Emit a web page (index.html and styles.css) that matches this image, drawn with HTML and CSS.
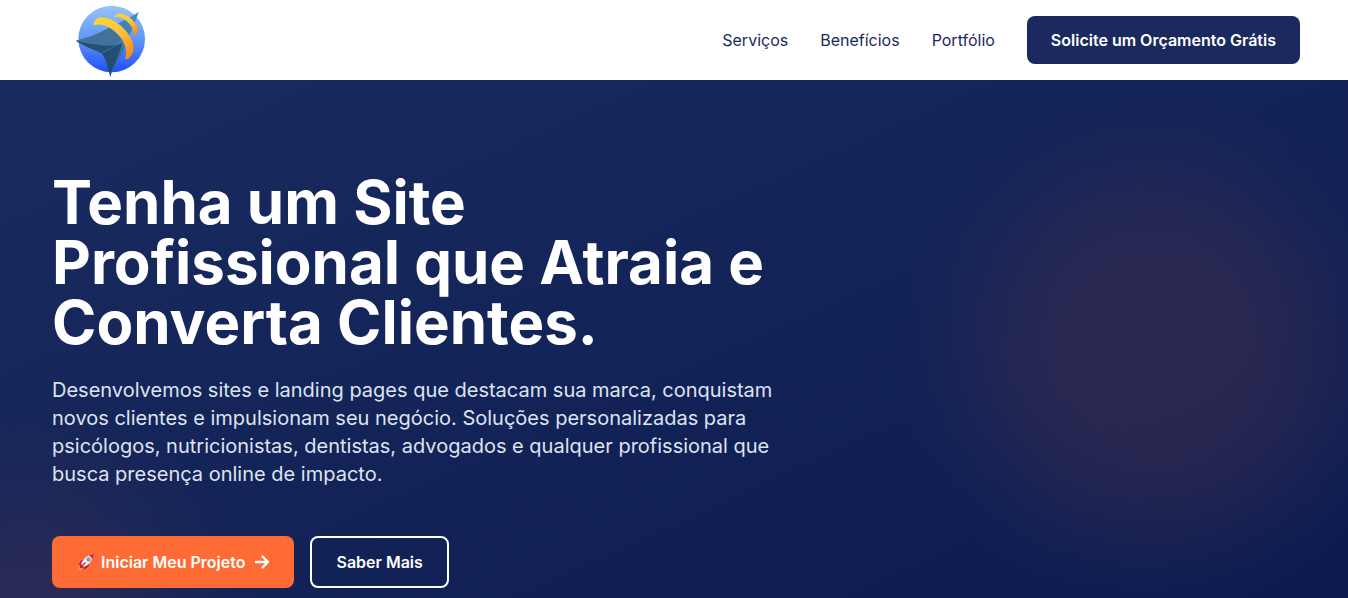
FILE: index.html
```html
<!DOCTYPE html>
<html lang="pt-BR">
<head>
<meta charset="utf-8">
<meta name="viewport" content="width=device-width, initial-scale=1">
<title>Sites Profissionais</title>
<link rel="stylesheet" href="styles.css">
</head>
<body>
<header class="header">
  <a class="logo" href="#" aria-label="Início">
    <svg width="90" height="80" viewBox="0 0 270 240" aria-hidden="true">
      <defs>
        <linearGradient id="globe" x1="0" y1="0" x2="0" y2="1"><stop offset="0" stop-color="#98c4fa"/><stop offset=".5" stop-color="#5f96f6"/><stop offset="1" stop-color="#1f4ff8"/></linearGradient>
        <linearGradient id="plane" x1="1" y1="0" x2="0" y2="1"><stop offset="0" stop-color="#3f8fd0"/><stop offset=".45" stop-color="#3a76a2"/><stop offset="1" stop-color="#234a70"/></linearGradient>
        <linearGradient id="ring" x1="0" y1="0" x2="1" y2="1"><stop offset="0" stop-color="#f6d92c"/><stop offset=".5" stop-color="#fdc540"/><stop offset="1" stop-color="#fb7f14"/></linearGradient>
      </defs>
      <circle cx="137" cy="117" r="100" fill="url(#globe)"/>
      <path d="M218 36C190 54 165 66 140 78C110 96 70 114 30 122C60 142 88 150 108 160C120 178 126 204 133 230C140 202 158 180 172 152C184 120 206 72 218 36Z" fill="url(#plane)"/>
      <path d="M30 122C75 112 108 96 130 82L165 118C150 132 128 146 106 156C82 148 54 138 30 122Z" fill="#41739a"/>
      <path d="M30 124C70 130 130 146 168 130C160 168 140 196 133 230C126 200 120 176 106 160C82 148 54 138 30 124Z" fill="#1c4468" opacity=".75"/>
      <path d="M108 158C128 148 150 138 168 124" fill="none" stroke="#5d8bac" stroke-width="3" opacity=".6"/>
      <path d="M82 76C84 62 92 53 106 52C132 52 160 70 180 93C202 118 210 148 195 168C191 174 184 178 177 178C186 156 178 128 158 105C136 82 108 67 82 76Z" fill="url(#ring)"/>
      <path d="M145 52C149 42 157 39 167 41C188 45 209 64 215 84C218 94 212 103 203 107C204 90 196 76 184 65C172 54 160 49 145 52Z" fill="url(#ring)"/>
    </svg>
  </a>
  <nav class="nav">
    <a class="nav-link" href="#servicos">Serviços</a>
    <a class="nav-link" href="#beneficios">Benefícios</a>
    <a class="nav-link" href="#portfolio">Portfólio</a>
    <button class="button button-navy" type="button">Solicite um Orçamento Grátis</button>
  </nav>
</header>
<main class="hero">
  <div class="hero-content">
    <h1 class="hero-title">Tenha um Site Profissional que Atraia e Converta Clientes.</h1>
    <p class="hero-text">Desenvolvemos sites e landing pages que destacam sua marca, conquistam novos clientes e impulsionam seu negócio. Soluções personalizadas para psicólogos, nutricionistas, dentistas, advogados e qualquer profissional que busca presença online de impacto.</p>
    <div class="actions">
      <button class="button button-orange" type="button">
        <svg class="rocket" width="20" height="20" viewBox="0 0 20 20" aria-hidden="true">
          <path d="M3 14 6 12 8 15 5 18 2 18Z" fill="#f5a03a"/>
          <path d="M9 7 5 8.500 2.500 13 6 12.500ZM13.500 11.500 12 15 7.500 18 8 14Z" fill="#c9193f"/>
          <path d="M5 12C7 7 11 3 16 3C17 8 13 13 8 15Z" fill="#efeaf3"/>
          <path d="M13 3.500 18 2 16.500 7Z" fill="#dd2348"/>
          <path d="M5 12 8 15 5 16.500 3.500 15Z" fill="#a91d49"/>
          <circle cx="12.500" cy="7.500" r="1.700" fill="#6fb0d2" stroke="#8291a6"/>
          <path d="M6.500 13.500 9.500 10.500" stroke="#d92347" stroke-width="1.300"/>
        </svg>
        <span>Iniciar Meu Projeto</span>
        <svg class="arrow" width="16" height="16" viewBox="0 0 16 16" fill="none" stroke="currentColor" stroke-width="2.400" stroke-linecap="round" stroke-linejoin="round" aria-hidden="true"><path d="M2 8H14M8.500 2.500 14 8 8.500 13.500"/></svg>
      </button>
      <button class="button button-outline" type="button">Saber Mais</button>
    </div>
  </div>
</main>
</body>
</html>
```
FILE: styles.css
```css
* { box-sizing: border-box; }

body {
  margin: 0;
  min-height: 100vh;
  display: flex;
  flex-direction: column;
  font-family: Inter, "Liberation Sans", sans-serif;
  font-size: 16px;
  line-height: 24px;
  color: #1a2a5e;
  background: #fff;
}

.header {
  display: flex;
  align-items: center;
  justify-content: space-between;
  min-height: 80px;
  padding: 0 48px;
}

.logo { display: flex; margin-left: 18px; }

.nav { display: flex; align-items: center; gap: 32px; }

.nav-link { color: inherit; text-decoration: none; }

.button {
  display: inline-flex;
  align-items: center;
  justify-content: center;
  padding: 12px 24px;
  border: 0;
  border-radius: 8px;
  font: inherit;
  font-weight: 600;
  color: #fff;
  cursor: pointer;
}

.button-navy { background: #1a2a5e; }

.hero {
  flex: 1;
  padding: 92px 52px 10px;
  color: #fff;
  background:
    radial-gradient(circle at 1158px 276px, rgba(255, 107, 53, 0.115) 0, rgba(255, 107, 53, 0.105) 90px, rgba(255, 107, 53, 0.075) 150px, rgba(255, 107, 53, 0.035) 200px, rgba(255, 107, 53, 0.008) 240px, transparent 262px),
    radial-gradient(circle at 34px 550px, rgba(255, 107, 53, 0.105) 0, rgba(255, 107, 53, 0.09) 60px, rgba(255, 107, 53, 0.055) 120px, rgba(255, 107, 53, 0.022) 170px, transparent 230px),
    linear-gradient(to bottom right, #1a2b5f, #0a1a50) 0 0 / 100% 600px;
}

.hero-content { max-width: 768px; }

.hero-title {
  margin: 0 0 24px;
  font-size: 60px;
  line-height: 60px;
  font-weight: 700;
}

.hero-text {
  margin: 0 0 48px;
  font-size: 20px;
  line-height: 28px;
  color: #dfe3ee;
}

.actions { display: flex; flex-wrap: wrap; gap: 16px; }

.button-orange { padding: 14px 24px; background: #ff6b35; }

.rocket { margin-right: 5px; }

.arrow { margin-left: 9px; }

.button-outline { border: 2px solid #fff; background: transparent; }
```
